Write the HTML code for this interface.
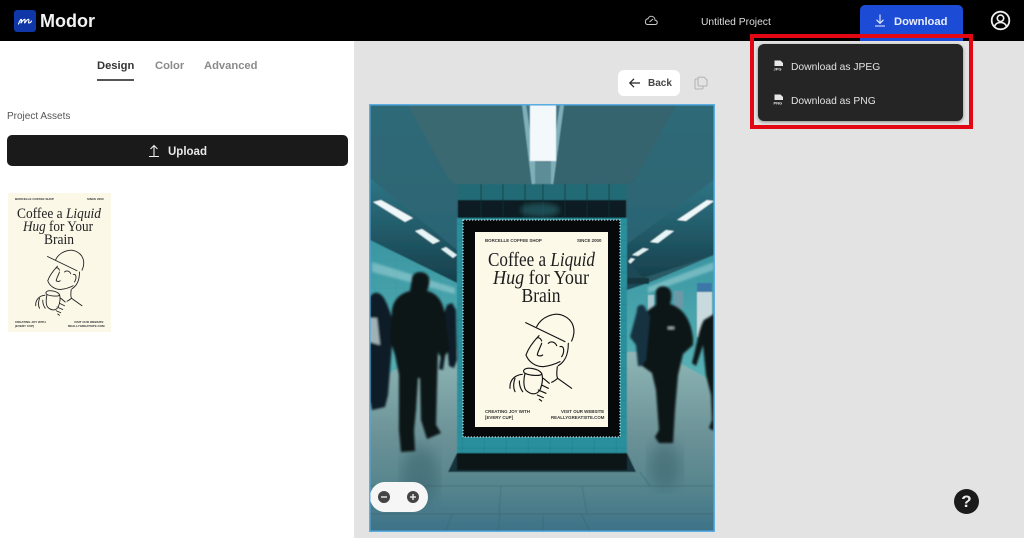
<!DOCTYPE html>
<html><head><meta charset="utf-8"><style>
*{box-sizing:border-box}
html,body{margin:0;padding:0;width:1024px;height:538px;overflow:hidden;background:#e3e3e3;font-family:"Liberation Sans",sans-serif}
.a{position:absolute}
.t{position:absolute;white-space:nowrap;line-height:1}
</style></head><body>
<div class="a" style="left:0;top:41px;width:354px;height:497px;background:#fff"></div>
<div class="a" style="left:0;top:0;width:1024px;height:41px;background:#000"></div>

<div class="a" style="left:14px;top:10px;width:22px;height:22px;border-radius:3px;background:#0f37a8"></div>
<svg class="a" style="left:14px;top:10px" width="22" height="22" viewBox="0 0 22 22"><path d="M4.5 14 C6 10 7 9 7.5 9.5 C8 10.5 6.5 13 7 13 C8.5 10.5 10.5 8.8 11 9.5 C11.5 10.5 10 13 10.8 13 C12 11 14 8.8 14.8 9.5 C15.5 10.5 13.8 12.8 14.8 13 C15.8 13 17 12 17.5 11" fill="none" stroke="#fff" stroke-width="1.1" stroke-linecap="round"/></svg>
<div class="t" style="left:40px;top:12px;font-size:18px;font-weight:bold;color:#f2f2f2">Modor</div>

<svg class="a" style="left:644px;top:14px" width="14" height="13" viewBox="0 0 14 13"><path d="M3.5 10.5 H10.8 C14 10.5 14 6.5 11 6.2 C10.8 1.5 5 1 4 4.8 C0.8 5 0.5 10.5 3.5 10.5 Z M5.5 8 L9 5" fill="none" stroke="#ccc" stroke-width="1"/></svg>
<div class="t" style="left:701px;top:18px;font-size:10.3px;color:#dedede">Untitled Project</div>

<div class="a" style="left:860px;top:5px;width:103px;height:36px;border-radius:5px 5px 0 0;background:#1c4bd6"></div>
<svg class="a" style="left:873px;top:13px" width="14" height="15" viewBox="0 0 14 15"><path d="M7 1.5 V10 M3.5 6.8 L7 10.3 L10.5 6.8 M2 13 H12" fill="none" stroke="#e8eefc" stroke-width="1.1"/></svg>
<div class="t" style="left:894px;top:17px;font-size:11.2px;font-weight:bold;color:#e8eefc">Download</div>

<svg class="a" style="left:990px;top:10px" width="21" height="21" viewBox="0 0 21 21"><circle cx="10.5" cy="10.5" r="8.8" fill="none" stroke="#f0f0f0" stroke-width="1.8"/><circle cx="10.5" cy="8.3" r="3.2" fill="none" stroke="#f0f0f0" stroke-width="1.6"/><path d="M4.5 16.5 C5.5 13.5 7.5 12.5 10.5 12.5 C13.5 12.5 15.5 13.5 16.5 16.5" fill="none" stroke="#f0f0f0" stroke-width="1.6"/></svg>

<div class="t" style="left:97px;top:61px;font-size:11.2px;font-weight:bold;color:#333">Design</div>
<div class="a" style="left:97px;top:79px;width:37px;height:2px;background:#555"></div>
<div class="t" style="left:155px;top:61px;font-size:11.2px;font-weight:bold;color:#8a8a8a">Color</div>
<div class="t" style="left:204px;top:61px;font-size:11.2px;font-weight:bold;color:#8a8a8a">Advanced</div>
<div class="t" style="left:7px;top:112px;font-size:10px;color:#555">Project Assets</div>

<div class="a" style="left:7px;top:135px;width:341px;height:31px;border-radius:5px;background:#1a1a1a"></div>
<svg class="a" style="left:147px;top:143px" width="14" height="15" viewBox="0 0 14 15"><path d="M7 13 V3 M3.5 6 L7 2.5 L10.5 6 M2 13.5 H12" fill="none" stroke="#eee" stroke-width="1.1"/></svg>
<div class="t" style="left:168px;top:147px;font-size:11.5px;font-weight:bold;color:#e8e8e8">Upload</div>

<!-- thumbnail -->
<svg class="a" style="left:0;top:185px" width="125" height="155" viewBox="0 0 125 155">
<defs><g id="face" transform="translate(460,215) scale(.3333)">
<path d="M197 323 L315 380 M230 335 C245 305 285 290 310 302 C340 315 350 345 335 378"/>
<path d="M237 362 C220 380 205 400 198 420 C205 440 225 455 250 455 C275 452 290 445 300 440 M300 395 C312 390 315 410 305 425 M325 385 C325 420 315 440 295 452 M228 372 C232 365 242 368 245 378 M265 385 C272 378 285 380 290 392 M245 385 C240 400 232 412 232 420 C238 425 245 422 248 420 M292 455 C290 470 290 485 293 490 L335 520 M293 490 C285 497 280 500 275 502"/>
<path d="M192 465 C200 455 235 460 245 475 C248 485 210 482 195 475 C190 472 190 468 192 465 M195 475 C190 495 190 520 200 528 C215 540 230 540 240 525 C248 505 250 490 245 475 M187 478 C165 480 148 495 150 520 M165 490 C160 505 160 520 165 530 M178 498 C178 510 182 522 188 530 M250 490 L268 505 M245 510 L265 520 M235 525 L258 535 M232 540 L250 548 M238 553 L245 558"/>
</g></defs>
<rect x="8" y="8" width="103" height="139" fill="#fbf8e8"/>
<g font-family="Liberation Sans,sans-serif" fill="#333" font-size="3" font-weight="bold"><text x="15" y="15">BORCELLE COFFEE SHOP</text><text x="87" y="15">SINCE 2000</text>
<text x="15" y="138">CREATING JOY WITH</text><text x="15" y="142">[EVERY CUP]</text><text x="74" y="138">VISIT OUR WEBSITE</text><text x="68" y="142">REALLYGREATSITE.COM</text></g>
<g font-family="Liberation Serif,serif" fill="#222" font-size="15" text-anchor="middle"><text x="59" y="33" textLength="84" lengthAdjust="spacingAndGlyphs">Coffee a <tspan font-style="italic">Liquid</tspan></text><text x="58" y="46" textLength="70" lengthAdjust="spacingAndGlyphs"><tspan font-style="italic">Hug</tspan> for Your</text><text x="59" y="59" textLength="30" lengthAdjust="spacingAndGlyphs">Brain</text></g>
<g transform="translate(-346.75,-170.5) scale(.75)" fill="none" stroke="#222" stroke-width="3.6" stroke-linecap="round" stroke-linejoin="round"><use href="#face"/></g>
</svg>

<!-- white buttons -->
<div class="a" style="left:618px;top:70px;width:62px;height:26px;border-radius:6px;background:#fff"></div>
<svg class="a" style="left:628px;top:77px" width="13" height="12" viewBox="0 0 13 12"><path d="M12 6 H2 M6 1.8 L1.8 6 L6 10.2" fill="none" stroke="#222" stroke-width="1.2"/></svg>
<div class="t" style="left:648px;top:79px;font-size:10px;font-weight:bold;color:#444">Back</div>
<svg class="a" style="left:694px;top:76px" width="14" height="14" viewBox="0 0 14 14"><path d="M4 3 H2 C1.3 3 1 3.4 1 4 V12 C1 12.6 1.3 13 2 13 H8 C8.6 13 9 12.6 9 12 V10 M4.5 1.2 H10 L13 4 V9 C13 9.6 12.6 10 12 10 H5 C4.4 10 4 9.6 4 9 V1.7 Z" fill="none" stroke="#b5b5b5" stroke-width="1.1"/></svg>

<!-- photo -->
<svg class="a" style="left:0;top:0" width="1024" height="538" viewBox="0 0 1024 538">
<defs>
<filter id="b05"><feGaussianBlur stdDeviation=".6"/></filter>
<filter id="b1"><feGaussianBlur stdDeviation="1"/></filter>
<filter id="b2"><feGaussianBlur stdDeviation="3"/></filter>
<filter id="b4"><feGaussianBlur stdDeviation="7"/></filter>
<linearGradient id="side" x1="0" y1="0" x2="0" y2="1"><stop offset="0" stop-color="#2f6a78"/><stop offset="1" stop-color="#2c6473"/></linearGradient>
<linearGradient id="bb" x1="0" y1="0" x2="0" y2="1"><stop offset="0" stop-color="#2e7686"/><stop offset="1" stop-color="#163e4a"/></linearGradient>
<linearGradient id="wall" x1="0" y1="0" x2="0" y2="1"><stop offset="0" stop-color="#3a96a2"/><stop offset="1" stop-color="#59b3b6"/></linearGradient>
<linearGradient id="floor" x1="0" y1="0" x2="0" y2="1"><stop offset="0" stop-color="#92b9b8"/><stop offset=".5" stop-color="#6a9196"/><stop offset=".78" stop-color="#55848d"/><stop offset="1" stop-color="#3d7288"/></linearGradient>
<clipPath id="ph"><rect x="370.5" y="105.5" width="343" height="425"/></clipPath>
<pattern id="tile" width="22" height="16" patternUnits="userSpaceOnUse"><path d="M0 0H22M0 0V16" stroke="#1b6775" stroke-width=".8" fill="none"/></pattern>
</defs>
<rect x="369" y="104" width="346" height="428" fill="#5aaee4"/>
<g clip-path="url(#ph)">
<rect x="370" y="105" width="344" height="426" fill="#2a5a65"/>
<g filter="url(#b05)">
<polygon points="408,105 526,105 532,185 457,185 448,178" fill="#3a6972"/>
<polygon points="558,105 676,105 636,178 626,185 553,185" fill="#35646e"/>
<polygon points="370,105 408,105 448,178 457,185 457,252 370,178" fill="url(#side)"/>
<polygon points="676,105 714,105 714,180 627,246 627,185 636,178" fill="url(#side)"/>
<polygon points="370,178 457,250 457,285 370,240" fill="url(#bb)"/>
<polygon points="714,180 627,244 627,283 714,255" fill="url(#bb)"/>
<polygon points="522,105 564,105 553,186 532,186" fill="#7fb0ba"/>
<polygon points="526,105 560,105 551,162 535,162" fill="#3f7686"/>
<polygon points="535,162 551,162 551,184 535,184" fill="#5d8e98"/>
<rect x="530" y="105" width="26" height="56" fill="#f3f9fb"/>
<polygon points="373,202 381,200 413,218 405,222" fill="#eef8fa"/>
<polygon points="415,231 422,229 440,241 433,244" fill="#e6f5f7"/>
<polygon points="441,249 446,247 457,255 453,258" fill="#dff1f3"/>
<polygon points="677,220 707,200 714,201 686,221" fill="#eef8fa"/>
<polygon points="650,242 666,230 674,231 658,243" fill="#e6f5f7"/>
<polygon points="632,255 643,248 649,249 638,256" fill="#dff1f3"/>
<polygon points="627,263 631,258 635,259 630,264" fill="#dff1f3"/>
<rect x="370" y="345" width="344" height="186" fill="url(#floor)"/>
<polygon points="370,240 457,283 457,350 400,367 370,385" fill="url(#wall)"/>
<rect x="370" y="260" width="87" height="110" fill="url(#tile)" opacity=".2"/>
<polygon points="714,255 648,283 627,283 627,352 660,352 714,382" fill="url(#wall)"/>
<polygon points="627,260 648,283 627,290" fill="#1d4a55"/>
<rect x="627" y="278" width="22" height="6" fill="#14343c"/>
<polygon points="372,262 455,288 455,294 372,272" fill="#c5e8ea" opacity=".4" filter="url(#b1)"/>
<polygon points="648,287 714,262 714,270 648,293" fill="#c5e8ea" opacity=".4" filter="url(#b1)"/>
<rect x="697" y="283" width="15" height="54" fill="#c8dadd"/><rect x="697" y="283" width="15" height="9" fill="#3a78a8"/>
<rect x="648" y="295" width="6" height="17" fill="#a9c9cf"/><rect x="674" y="291" width="9" height="18" fill="#6d98a8"/>
<g stroke="#2f5f6c" stroke-width=".7" fill="none" opacity=".6"><path d="M370 486H714M370 514H714M500 514L498 531M543 514V531M581 514L590 531M452 514L446 531M501 486L499 514M582 486L587 514M640 472L650 486M420 486L415 504"/></g>
<ellipse cx="420" cy="475" rx="18" ry="30" fill="#2d5561" opacity=".4" filter="url(#b4)"/>
<ellipse cx="665" cy="465" rx="16" ry="24" fill="#2d5561" opacity=".4" filter="url(#b4)"/>
<rect x="457" y="184" width="170" height="16" fill="#246b74"/>
<rect x="458" y="200" width="168" height="18" fill="#0c1c20"/>
<g stroke="#11343a" stroke-width=".8"><path d="M481 184V217M503 184V217M525 184V217M543 184V217M565 184V217M587 184V217M609 184V217"/></g>
<ellipse cx="540" cy="210" rx="20" ry="7" fill="#2a6e78" opacity=".6" filter="url(#b2)"/>
<rect x="457" y="218" width="170" height="236" fill="#2c8f9c"/>
<rect x="457" y="218" width="170" height="236" fill="url(#tile)" opacity=".7"/>
<polygon points="457,453 627,453 636,472 448,472" fill="#14303a"/>
<rect x="457" y="453" width="170" height="17" fill="#071215"/>
</g>
<g filter="url(#b1)" fill="#0a1418">
<path d="M370 297 C374 290 381 292 385 300 C388 306 390 312 392 318 L392 345 L388 395 L385 407 L372 410 L370 400 Z" fill="#0e1d28"/>
<path d="M370 318 H377 L380 345 L370 342 Z" fill="#9fb2b8"/>
<path d="M443 316 L447 305 L452 303 L456 310 L457 360 L454 368 L449 366 L447 345 L443 370 L439 369 L443 340 Z" fill="#101d26"/>
<path d="M412 279 C412 270 427 270 429 278 C430 283 428 288 427 291 C436 293 443 300 445 315 L449 350 L442 360 L438 352 L437 385 L436 425 L441 433 L427 439 L421 420 L420 378 L418 378 L416 410 L414 430 L415 451 L401 452 L399 430 L399 375 L395 355 L390 340 L392 310 C394 298 402 293 410 291 Z"/>
<path d="M656 295 C654 284 669 284 671 292 C672 297 671 300 670 304 C683 308 691 320 693 338 L693 345 L683 354 L678 375 L675 410 L673 443 L659 443 L655 437 L659 430 L656 390 L652 373 L641 365 L639 325 C641 315 649 309 656 305 Z"/>
<path d="M637 311 C636 304 645 302 646 310 L650 316 L646 360 L642 366 L638 366 L636 345 L630 337 Z" fill="#14303f"/>
<rect x="668" y="327" width="6" height="2" fill="#9fb5bb"/>
<path d="M714 314 L704 320 C699 328 697 345 692 363 L696 366 L703 345 L706 375 L711 395 L712 420 L709 428 L714 431 Z"/>
</g>
<rect x="463" y="220" width="157" height="217" fill="#06080a" stroke="#c4d6d3" stroke-width="1.3" stroke-dasharray="1.3 1.7"/>
<rect x="475" y="232" width="133" height="195" fill="#fcf9e9"/>
<g font-family="Liberation Sans,sans-serif" fill="#333" font-size="4.4" font-weight="bold"><text x="485" y="242">BORCELLE COFFEE SHOP</text><text x="577" y="242">SINCE 2000</text>
<text x="485" y="413">CREATING JOY WITH</text><text x="485" y="419">[EVERY CUP]</text><text x="561" y="413">VISIT OUR WEBSITE</text><text x="551" y="419">REALLYGREATSITE.COM</text></g>
<g font-family="Liberation Serif,serif" fill="#1c1c1c" font-size="19.5" text-anchor="middle"><text x="541.5" y="266" textLength="107" lengthAdjust="spacingAndGlyphs">Coffee a <tspan font-style="italic">Liquid</tspan></text><text x="541" y="284" textLength="96" lengthAdjust="spacingAndGlyphs"><tspan font-style="italic">Hug</tspan> for Your</text><text x="541" y="302" textLength="39" lengthAdjust="spacingAndGlyphs">Brain</text></g>
<g fill="none" stroke="#111" stroke-width="3.4" stroke-linecap="round" stroke-linejoin="round"><use href="#face"/></g>
<rect x="370" y="482" width="58" height="30" rx="15" fill="#f6f6f6"/>
<circle cx="384" cy="497" r="6" fill="#444"/><rect x="381" y="496.3" width="6" height="1.4" fill="#eee"/>
<circle cx="413" cy="497" r="6" fill="#444"/><rect x="410" y="496.3" width="6" height="1.4" fill="#eee"/><rect x="412.3" y="494" width="1.4" height="6" fill="#eee"/>
</g>
</svg>

<!-- dropdown -->
<div class="a" style="left:750px;top:34px;width:223px;height:95px;border:4px solid #e30613"></div>
<div class="a" style="left:758px;top:44px;width:205px;height:77px;border-radius:6px;background:#252525;box-shadow:0 1px 3px rgba(0,0,0,.4)"></div>
<svg class="a" style="left:773px;top:60px" width="12" height="11" viewBox="0 0 12 11"><path d="M1.5 0.5H7.5L10 3V6H1.5Z" fill="#e6e6e6"/><text x="0.5" y="10.5" font-size="4" font-weight="bold" fill="#e6e6e6" font-family="Liberation Sans,sans-serif">JPG</text></svg>
<svg class="a" style="left:773px;top:94px" width="12" height="11" viewBox="0 0 12 11"><path d="M1.5 0.5H7.5L10 3V6H1.5Z" fill="#e6e6e6"/><text x="0.5" y="10.5" font-size="4" font-weight="bold" fill="#e6e6e6" font-family="Liberation Sans,sans-serif">PNG</text></svg>
<div class="t" style="left:791px;top:63px;font-size:10.3px;color:#e2e2e2">Download as JPEG</div>
<div class="t" style="left:791px;top:97px;font-size:10.3px;color:#e2e2e2">Download as PNG</div>

<div class="a" style="left:954px;top:489px;width:25px;height:25px;border-radius:50%;background:#1b1b1b"></div>
<div class="t" style="left:954px;top:493px;width:25px;text-align:center;font-size:17px;font-weight:bold;color:#eee">?</div>
</body></html>
